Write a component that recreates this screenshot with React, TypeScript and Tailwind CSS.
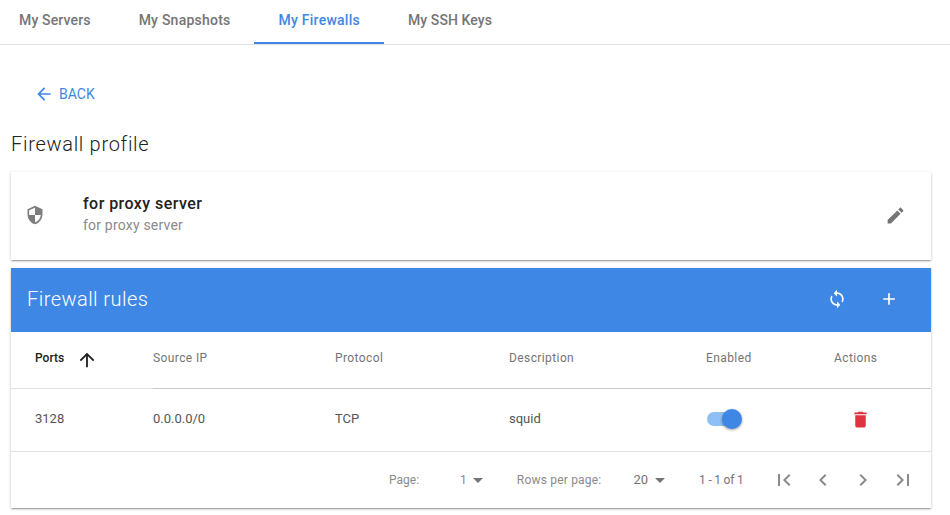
const cardShadow =
  "shadow-[0_1px_3px_0_rgba(0,0,0,0.2),0_1px_1px_0_rgba(0,0,0,0.14),0_2px_1px_-1px_rgba(0,0,0,0.12)]";

function Icon({ d, className }: { d: string; className: string }) {
  return (
    <svg viewBox="0 0 24 24" fill="currentColor" className={className}>
      <path d={d} />
    </svg>
  );
}

const icons = {
  back: "M20 11H7.83l5.59-5.59L12 4l-8 8 8 8 1.41-1.41L7.83 13H20v-2z",
  shield:
    "M12 1L3 5v6c0 5.55 3.84 10.74 9 12 5.16-1.26 9-6.45 9-12V5l-9-4zm0 10.99h7c-.53 4.12-3.28 7.79-7 8.94V12H5V6.3l7-3.11v8.8z",
  edit: "M3 17.25V21h3.75L17.81 9.94l-3.75-3.75L3 17.25zM20.71 7.04c.39-.39.39-1.02 0-1.41l-2.34-2.34c-.39-.39-1.02-.39-1.41 0l-1.83 1.83 3.75 3.75 1.83-1.83z",
  sync: "M12 4V1L8 5l4 4V6c3.31 0 6 2.69 6 6 0 1.01-.25 1.97-.7 2.8l1.46 1.46C19.54 15.03 20 13.57 20 12c0-4.42-3.58-8-8-8zm0 14c-3.31 0-6-2.69-6-6 0-1.01.25-1.97.7-2.8L5.24 7.74C4.46 8.97 4 10.43 4 12c0 4.42 3.58 8 8 8v3l4-4-4-4v3z",
  plus: "M19 13h-6v6h-2v-6H5v-2h6V5h2v6h6v2z",
  up: "M4 12l1.41 1.41L11 7.83V20h2V7.83l5.58 5.59L20 12l-8-8-8 8z",
  trash: "M6 19c0 1.1.9 2 2 2h8c1.1 0 2-.9 2-2V7H6v12zM19 4h-3.5l-1-1h-5l-1 1H5v2h14V4z",
  drop: "M7 10l5 5 5-5z",
  first: "M18.41 16.59L13.82 12l4.59-4.59L17 6l-6 6 6 6zM6 6h2v12H6z",
  prev: "M15.41 7.41L14 6l-6 6 6 6 1.41-1.41L10.83 12z",
  next: "M10 6L8.59 7.41 13.17 12l-4.58 4.59L10 18l6-6z",
  last: "M5.59 7.41L10.18 12l-4.59 4.59L7 18l6-6-6-6zM16 6h2v12h-2z",
};

const tabs = [
  { label: "My Servers", className: "pl-[19px] pr-[24px] tracking-[0.15px] text-[#757575] border-transparent" },
  { label: "My Snapshots", className: "px-[24px] tracking-[0.23px] text-[#757575] border-transparent" },
  { label: "My Firewalls", className: "px-[24px] tracking-[0.25px] text-[#3f87e5] border-[#3f87e5]" },
  { label: "My SSH Keys", className: "px-[24px] tracking-[0.1px] text-[#757575] border-transparent" },
];

const headCell = "flex items-center h-[57px] pb-[4px] text-[12px] border-b";
const bodyCell = "flex items-center h-[63px] pb-[3px] border-b border-[#e0e0e0] text-[13px] text-[#555555]";

export default function App() {
  return (
    <div className="w-[950px] h-[515px] overflow-hidden bg-white font-['Roboto',sans-serif] text-[#212121]">
      <div className="flex h-[45px] border-b border-[#e0e0e0]">
        {tabs.map((tab) => (
          <div
            key={tab.label}
            className={`flex items-center h-[44px] pb-[2px] border-b-2 text-[14px] font-medium ${tab.className}`}
          >
            {tab.label}
          </div>
        ))}
      </div>

      <div className="pl-[11px] pr-[19px]">
        <div className="flex items-center h-[36px] mt-[31px] ml-[24px] text-[14px] text-[#3f87e5]">
          <Icon d={icons.back} className="w-[20px] h-[20px] -ml-[1px] mr-[5px]" />
          <span className="font-normal">BACK</span>
        </div>

        <h1 className="mt-[17px] h-[30px] leading-[30px] text-[20px] font-light tracking-[0.7px] text-[#212121]">
          Firewall profile
        </h1>

        <div className={`flex items-center h-[88px] mt-[13px] bg-white ${cardShadow}`}>
          <Icon d={icons.shield} className="w-[20px] h-[20px] ml-[14px] mb-[2px] text-[#7d7d7d]" />
          <div className="ml-[38px] mb-[4px] flex flex-col">
            <div className="text-[16px] leading-[22px] font-medium tracking-[0.45px] text-[#212121]">for proxy server</div>
            <div className="text-[14px] leading-[20px] text-[#8a8a8a] tracking-[0.2px]">for proxy server</div>
          </div>
          <Icon d={icons.edit} className="w-[21px] h-[21px] ml-auto mr-[25px] mb-[2px] text-[#757575]" />
        </div>

        <div className={`mt-[8px] bg-white ${cardShadow}`}>
          <div className="flex items-center h-[64px] pb-[2px] pl-[16px] bg-[#3f87e5] text-white">
            <div className="text-[20px] font-light tracking-[0.45px]">Firewall rules</div>
            <Icon d={icons.sync} className="w-[20px] h-[20px] ml-auto" />
            <Icon d={icons.plus} className="w-[20px] h-[20px] ml-[32px] mr-[32px]" />
          </div>

          <div className="grid grid-cols-[142px_182px_174px_197px_128px_97px]">
            <div className={`${headCell} font-medium pl-[24px] border-[#e0e0e0] text-[#212121]`}>
              Ports
              <Icon d={icons.up} className="w-[22px] h-[22px] ml-[12px] mt-[4px] text-[#212121]" />
            </div>
            <div className={`${headCell} tracking-[0.4px] border-[#c8c8c8] text-[#757575]`}>Source IP</div>
            <div className={`${headCell} tracking-[0.4px] border-[#c8c8c8] text-[#757575]`}>Protocol</div>
            <div className={`${headCell} tracking-[0.4px] border-[#c8c8c8] text-[#757575]`}>Description</div>
            <div className={`${headCell} tracking-[0.4px] border-[#c8c8c8] text-[#757575]`}>Enabled</div>
            <div className={`${headCell} tracking-[0.4px] border-[#c8c8c8] text-[#757575]`}>Actions</div>

            <div className={`${bodyCell} pl-[24px]`}>3128</div>
            <div className={bodyCell}>0.0.0.0/0</div>
            <div className={bodyCell}>TCP</div>
            <div className={bodyCell}>squid</div>
            <div className="flex items-center h-[63px] pb-[2px] border-b border-[#e0e0e0]">
              <div className="relative w-[34px] h-[14px] rounded-full bg-[#8fc0f5] ml-[1px]">
                <div className="absolute -right-[1px] -top-[3px] w-[20px] h-[20px] rounded-full bg-[#3f87e5] shadow-[0_1px_3px_rgba(0,0,0,0.4)]" />
              </div>
            </div>
            <div className="flex items-center h-[63px] pb-[2px] border-b border-[#e0e0e0]">
              <Icon d={icons.trash} className="w-[21px] h-[21px] ml-[16px] text-[#e03340]" />
            </div>
          </div>

          <div className="flex items-center h-[56px] text-[12px] text-[#8a8a8a]">
            <span className="ml-[378px]">Page:</span>
            <span className="ml-[41px]">1</span>
            <Icon d={icons.drop} className="w-[24px] h-[24px] ml-[-1px] text-[#757575]" />
            <span className="ml-[27px] tracking-[0.2px]">Rows per page:</span>
            <span className="ml-[32px] text-[13px] text-[#757575]">20</span>
            <Icon d={icons.drop} className="w-[24px] h-[24px] text-[#757575]" />
            <span className="ml-[27px] tracking-[-0.2px] text-[#757575]">1 - 1 of 1</span>
            <Icon d={icons.first} className="w-[24px] h-[24px] ml-[28px] text-[#8a8a8a]" />
            <Icon d={icons.prev} className="w-[24px] h-[24px] ml-[15px] text-[#8a8a8a]" />
            <Icon d={icons.next} className="w-[24px] h-[24px] ml-[16px] text-[#8a8a8a]" />
            <Icon d={icons.last} className="w-[24px] h-[24px] ml-[16px] text-[#8a8a8a]" />
          </div>
        </div>
      </div>
    </div>
  );
}
